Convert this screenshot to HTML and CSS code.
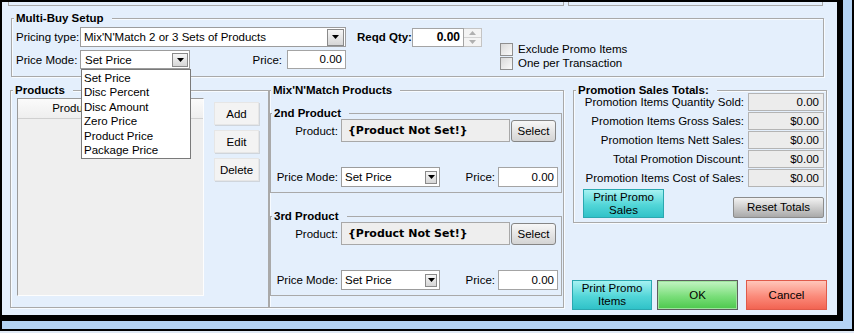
FILE: index.html
```html
<!DOCTYPE html>
<html lang="en">
<head>
    <meta charset="UTF-8">
    <title>Multi-Buy Setup</title>
    <link rel="stylesheet" href="styles.css">
</head>
<body>
    <div class="screen">
        <div class="panel">
            <div class="top-boxes">
                <div class="cut cut-a"></div>
                <div class="cut cut-b"></div>
            </div>

            <div class="group multibuy">
                <div class="legend">Multi-Buy Setup</div>
                <div class="mb-body">
                    <div class="mb-fields">
                        <div class="row row-type">
                            <div class="lbl lbl-mb">Pricing type:</div>
                            <div class="combo combo-type">
                                <span class="combo-text">Mix'N'Match 2 or 3 Sets of Products</span>
                                <span class="drop"><svg width="7" height="4" viewBox="0 0 7 4"><path d="M0 0h7L3.5 4z"/></svg></span>
                            </div>
                            <div class="lbl bold qty-lbl">Reqd Qty:</div>
                            <div class="field qty">0.00</div>
                            <div class="spin">
                                <span><svg width="7" height="4" viewBox="0 0 7 4"><path d="M0 4h7L3.5 0z"/></svg></span>
                                <span><svg width="7" height="4" viewBox="0 0 7 4"><path d="M0 0h7L3.5 4z"/></svg></span>
                            </div>
                        </div>
                        <div class="row row-mode">
                            <div class="lbl lbl-mb">Price Mode:</div>
                            <div class="combo combo-mode">
                                <span class="combo-text">Set Price</span>
                                <span class="drop"><svg width="7" height="4" viewBox="0 0 7 4"><path d="M0 0h7L3.5 4z"/></svg></span>
                                <ul class="droplist">
                                    <li>Set Price</li>
                                    <li>Disc Percent</li>
                                    <li>Disc Amount</li>
                                    <li>Zero Price</li>
                                    <li>Product Price</li>
                                    <li>Package Price</li>
                                </ul>
                            </div>
                            <div class="lbl price-lbl">Price:</div>
                            <div class="field price-top">0.00</div>
                        </div>
                    </div>
                    <div class="mb-checks">
                        <div class="check"><span class="box"></span>Exclude Promo Items</div>
                        <div class="check"><span class="box"></span>One per Transaction</div>
                    </div>
                </div>
            </div>

            <div class="lower">
                <div class="group products">
                    <div class="legend">Products</div>
                    <div class="prod-body">
                        <div class="table">
                            <div class="thead">
                                <div class="th th-product">Product</div>
                                <div class="th"></div>
                            </div>
                        </div>
                        <div class="side-btns">
                            <button class="btn-flat">Add</button>
                            <button class="btn-flat">Edit</button>
                            <button class="btn-flat">Delete</button>
                        </div>
                    </div>
                </div>

                <div class="group mix">
                    <div class="legend">Mix'N'Match Products</div>

                    <div class="group sub sub-2nd">
                        <div class="legend">2nd Product</div>
                        <div class="row prow">
                            <div class="lbl lbl-sub">Product:</div>
                            <div class="prod-name">{Product Not Set!}</div>
                            <button class="btn-select">Select</button>
                        </div>
                        <div class="row mrow">
                            <div class="lbl lbl-sub">Price Mode:</div>
                            <div class="combo combo-sub">
                                <span class="combo-text">Set Price</span>
                                <span class="drop"><svg width="7" height="4" viewBox="0 0 7 4"><path d="M0 0h7L3.5 4z"/></svg></span>
                            </div>
                            <div class="lbl lbl-price">Price:</div>
                            <div class="field price-sub">0.00</div>
                        </div>
                    </div>

                    <div class="group sub sub-3rd">
                        <div class="legend">3rd Product</div>
                        <div class="row prow">
                            <div class="lbl lbl-sub">Product:</div>
                            <div class="prod-name">{Product Not Set!}</div>
                            <button class="btn-select">Select</button>
                        </div>
                        <div class="row mrow">
                            <div class="lbl lbl-sub">Price Mode:</div>
                            <div class="combo combo-sub">
                                <span class="combo-text">Set Price</span>
                                <span class="drop"><svg width="7" height="4" viewBox="0 0 7 4"><path d="M0 0h7L3.5 4z"/></svg></span>
                            </div>
                            <div class="lbl lbl-price">Price:</div>
                            <div class="field price-sub">0.00</div>
                        </div>
                    </div>
                </div>

                <div class="side">
                    <div class="group promo">
                        <div class="legend">Promotion Sales Totals:</div>
                        <div class="totals">
                            <div class="total"><span class="lbl t-lbl">Promotion Items Quantity Sold:</span><span class="t-val">0.00</span></div>
                            <div class="total"><span class="lbl t-lbl">Promotion Items Gross Sales:</span><span class="t-val">$0.00</span></div>
                            <div class="total"><span class="lbl t-lbl">Promotion Items Nett Sales:</span><span class="t-val">$0.00</span></div>
                            <div class="total"><span class="lbl t-lbl">Total Promotion Discount:</span><span class="t-val">$0.00</span></div>
                            <div class="total"><span class="lbl t-lbl">Promotion Items Cost of Sales:</span><span class="t-val">$0.00</span></div>
                        </div>
                        <div class="promo-btns">
                            <button class="btn btn-cyan btn-sales">Print Promo<br>Sales</button>
                            <button class="btn btn-grey btn-reset">Reset Totals</button>
                        </div>
                    </div>
                    <div class="dialog-btns">
                        <button class="btn btn-cyan btn-items">Print Promo<br>Items</button>
                        <button class="btn btn-green btn-ok">OK</button>
                        <button class="btn btn-red btn-cancel">Cancel</button>
                    </div>
                </div>
            </div>
        </div>
        <div class="edge-right"></div>
        <div class="edge-bottom"></div>
        <div class="edge-foot"></div>
    </div>
</body>
</html>
```

FILE: styles.css
```css
body {
    margin: 0;
    font-family: "Liberation Sans", Arial, sans-serif;
    font-size: 11.5px;
    color: #000;
}
.screen {
    width: 854px;
    height: 333px;
    background: #000;
    display: grid;
    grid-template-columns: 2px 835px 6px 9px 2px;
    grid-template-rows: 2px 313px 6px 8px 2px 2px;
}
.panel {
    grid-column: 2;
    grid-row: 2;
    background: #e4effc;
    overflow: hidden;
}
.edge-right {
    grid-column: 4;
    grid-row: 1 / 5;
    background: #b4d3f4;
}
.edge-bottom {
    grid-column: 2 / 4;
    grid-row: 4;
    background: #b4d3f4;
}
.edge-foot {
    grid-column: 1 / -1;
    grid-row: 6;
    background: #dfe9f5;
}

/* cut-off panels above */
.top-boxes {
    display: flex;
    gap: 4px;
    height: 4px;
    margin-left: 6px;
}
.cut {
    border: 1px solid #a9a9a9;
    border-top: none;
    box-sizing: border-box;
}
.cut-a { width: 556px; }
.cut-b { width: 255px; }

/* group boxes */
.group {
    border: 1px solid #a9a9a9;
    box-sizing: border-box;
    box-shadow: inset 1px 1px 0 #f7fbff, 1px 1px 0 #f7fbff;
}
.legend {
    display: table;
    margin: -8px 0 0 2px;
    padding: 0 8px 0 2px;
    line-height: 14px;
    font-weight: bold;
    background: #e4effc;
}
.row {
    display: flex;
    align-items: center;
}
.lbl {
    white-space: nowrap;
}
.bold {
    font-weight: bold;
}

/* multi-buy setup */
.multibuy {
    margin: 12px 0 0 9px;
    width: 813px;
    height: 59px;
}
.mb-body {
    display: flex;
    padding-left: 4px;
}
.row-type {
    margin-top: 2px;
    height: 20px;
}
.row-mode {
    margin-top: 3px;
    height: 19px;
}
.lbl-mb {
    width: 61px;
    text-align: right;
    margin-right: 3px;
}
.combo {
    position: relative;
    display: flex;
    align-items: center;
    height: 100%;
    box-sizing: border-box;
    background: #fff;
    border: 1px solid #9c9c9c;
}
.combo-text {
    flex: 1;
    padding-left: 3px;
    white-space: nowrap;
    overflow: hidden;
}
.drop {
    display: flex;
    align-items: center;
    justify-content: center;
    width: 16px;
    height: 14px;
    margin-right: 1px;
    border: 1px solid #8a8a8a;
    box-sizing: border-box;
    background: linear-gradient(#f6f6f6, #d6d6d6);
}
.combo-type {
    width: 266px;
}
.combo-type .drop {
    width: 17px;
    height: 17px;
}
.combo-mode {
    width: 110px;
}
.combo-mode .combo-text {
    padding-left: 4px;
}
.droplist {
    position: absolute;
    top: calc(100% + 1px);
    left: 0;
    width: 110px;
    margin: 0;
    padding: 1px 0;
    list-style: none;
    background: #fff;
    border: 1px solid #7a7a7a;
    box-sizing: border-box;
    z-index: 5;
}
.droplist li {
    line-height: 14.4px;
    padding-left: 2px;
}
.qty-lbl {
    width: 52px;
    margin-left: 11px;
}
.field {
    height: 19px;
    box-sizing: border-box;
    background: #fff;
    border: 1px solid #a4a4a4;
    text-align: right;
    padding-right: 3px;
    line-height: 17px;
}
.qty {
    width: 52px;
    margin-left: 3px;
    font-weight: bold;
    font-size: 12px;
}
.spin {
    display: flex;
    flex-direction: column;
    width: 18px;
    height: 19px;
    box-sizing: border-box;
    border: 1px solid #c4c4c4;
    border-left: none;
    background: #f4f4f4;
}
.spin span {
    flex: 1;
    display: flex;
    align-items: center;
    justify-content: center;
}
.spin span + span {
    border-top: 1px solid #d4d4d4;
}
.spin svg {
    fill: #b0b0b0;
}
.price-lbl {
    width: 92px;
    text-align: right;
    margin-right: 5px;
}
.price-top {
    width: 59px;
}
.mb-checks {
    margin-left: 18px;
    padding-top: 17px;
}
.check {
    display: flex;
    align-items: center;
    height: 14px;
}
.box {
    width: 13px;
    height: 13px;
    box-sizing: border-box;
    border: 1px solid #8f8f8f;
    background: linear-gradient(135deg, #d9d9d9, #fafafa);
    margin-right: 5px;
}

/* lower area */
.lower {
    display: flex;
    align-items: flex-start;
    margin: 13px 0 0 8px;
}
.products {
    width: 259px;
    height: 218px;
}
.prod-body {
    display: flex;
    align-items: flex-start;
}
.table {
    width: 187px;
    height: 198px;
    margin: 1px 0 0 6px;
    box-sizing: border-box;
    border: 1px solid;
    border-color: #9a9a9a #fdfdfd #fdfdfd #9a9a9a;
    background: #efefef;
}
.thead {
    display: flex;
    height: 19px;
    background: linear-gradient(#fbfbfb, #eeeeee);
    border-bottom: 1px solid #d0d0d0;
}
.th {
    flex: 1;
    line-height: 19px;
    text-align: center;
}
.th-product {
    flex: none;
    width: 108px;
    border-right: 1px solid #d6d6d6;
}
.side-btns {
    display: flex;
    flex-direction: column;
    gap: 5px;
    margin: 5px 0 0 10px;
}
.btn-flat {
    width: 45px;
    height: 23px;
    padding: 0;
    font: inherit;
    background: #f3f3f3;
    border: 1px solid #e6e6e6;
    box-shadow: 1px 1px 0 #cfd5dc;
}

.mix {
    width: 295px;
    height: 218px;
}
.mix .legend {
    margin-left: 1px;
}
.sub {
    width: 292px;
    height: 80px;
    box-shadow: none;
}
.sub-2nd {
    margin-top: 16px;
}
.sub-3rd {
    margin-top: 23px;
}
.prow {
    margin-top: -1px;
    height: 23px;
}
.mrow {
    margin-top: 25px;
    height: 20px;
}
.lbl-sub {
    width: 67px;
    text-align: right;
    margin-right: 3px;
}
.prod-name {
    width: 169px;
    height: 23px;
    box-sizing: border-box;
    padding-left: 6px;
    line-height: 21px;
    font-family: "DejaVu Sans", Verdana, sans-serif;
    font-weight: bold;
    font-size: 11px;
    background: #eeeeee;
    border: 1px solid #a8a8a8;
    white-space: nowrap;
}
.btn-select {
    width: 45px;
    height: 22px;
    margin-left: 1px;
    padding: 0;
    font: inherit;
    background: linear-gradient(#f7f7f7, #d4d4d4);
    border: 1px solid #858585;
    border-radius: 3px;
}
.combo-sub {
    width: 99px;
}
.combo-sub .drop {
    width: 12px;
    height: 13px;
    margin-right: 2px;
}
.lbl-price {
    width: 55px;
    text-align: right;
    margin-right: 3px;
}
.price-sub {
    width: 60px;
    height: 20px;
    line-height: 18px;
}

/* right column */
.side {
    width: 254px;
    margin-left: 9px;
}
.promo {
    height: 133px;
    padding-right: 2px;
}
.totals {
    display: flex;
    flex-direction: column;
    gap: 1px;
    margin-top: -4px;
}
.total {
    display: flex;
    align-items: center;
    height: 18px;
}
.t-lbl {
    width: 170px;
    text-align: right;
    margin-right: 4px;
}
.t-val {
    width: 76px;
    height: 18px;
    box-sizing: border-box;
    background: #ececec;
    border: 1px solid #b4b4b4;
    text-align: right;
    padding-right: 4px;
    line-height: 16px;
}
.promo-btns {
    display: flex;
    align-items: flex-end;
    justify-content: space-between;
    margin-top: 2px;
    padding-left: 9px;
}
.btn {
    padding: 0;
    font: inherit;
    line-height: 13px;
    box-sizing: border-box;
}
.btn-cyan {
    background: linear-gradient(#a6f2f2, #52d6d8 55%, #30c2c8);
    border: 1px solid #2aa8b0;
}
.btn-grey {
    background: linear-gradient(#f2f2f2, #c6c6c6 60%, #a9a9a9);
    border: 1px solid #8c8c8c;
    border-radius: 2px;
}
.btn-green {
    background: linear-gradient(#c4f4c4, #7ade7a 55%, #4cc84c);
    border: 1px solid #5e5e5e;
    box-shadow: inset 0 0 0 1px #9de49d;
}
.btn-red {
    background: linear-gradient(#ffc6ba, #fb8a7a 55%, #f26452);
    border: 1px solid #e05a4a;
}
.btn-sales {
    width: 81px;
    height: 29px;
}
.btn-reset {
    width: 91px;
    height: 21px;
}
.dialog-btns {
    display: flex;
    margin: 57px 0 0 -1px;
}
.dialog-btns .btn {
    height: 30px;
}
.btn-items {
    width: 80px;
}
.btn-ok {
    width: 81px;
    margin-left: 5px;
}
.btn-cancel {
    width: 81px;
    margin-left: 8px;
}
```
